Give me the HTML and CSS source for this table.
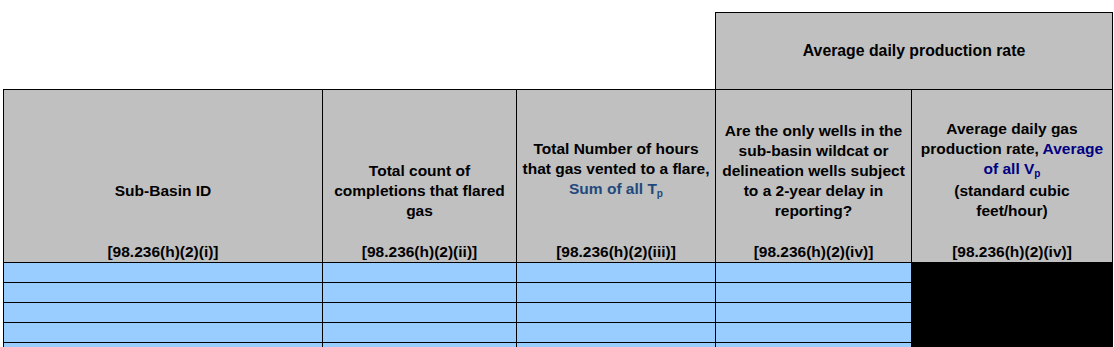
FILE: index.html
```html
<!DOCTYPE html>
<html lang="en">
<head>
<meta charset="utf-8">
<title>Flared gas by sub-basin</title>
<link rel="stylesheet" href="styles.css">
</head>
<body>
<div class="sheet">
  <div class="spacer"></div>
  <div class="cell group">Average daily production rate</div>

  <div class="cell head">
    <div class="label gap-lg">Sub-Basin ID</div>
    <div class="code">[98.236(h)(2)(i)]</div>
  </div>
  <div class="cell head">
    <div class="label">Total count of<br>completions that flared<br>gas</div>
    <div class="code">[98.236(h)(2)(ii)]</div>
  </div>
  <div class="cell head">
    <div class="label gap-lg">Total Number of hours<br>that gas vented to a flare,<br><span class="ref-a">Sum of all T<sub>p</sub></span></div>
    <div class="code">[98.236(h)(2)(iii)]</div>
  </div>
  <div class="cell head">
    <div class="label">Are the only wells in the<br>sub-basin wildcat or<br>delineation wells subject<br>to a 2-year delay in<br>reporting?</div>
    <div class="code">[98.236(h)(2)(iv)]</div>
  </div>
  <div class="cell head last">
    <div class="label">Average daily gas<br>production rate, <span class="ref-b">Average<br>of all V<sub>p</sub></span><br>(standard cubic<br>feet/hour)</div>
    <div class="code">[98.236(h)(2)(iv)]</div>
  </div>

  <div class="cell input"></div><div class="cell input"></div><div class="cell input"></div><div class="cell input"></div><div class="cell blocked last"></div>
  <div class="cell input"></div><div class="cell input"></div><div class="cell input"></div><div class="cell input"></div><div class="cell blocked last"></div>
  <div class="cell input"></div><div class="cell input"></div><div class="cell input"></div><div class="cell input"></div><div class="cell blocked last"></div>
  <div class="cell input"></div><div class="cell input"></div><div class="cell input"></div><div class="cell input"></div><div class="cell blocked last"></div>
  <div class="cell input"></div><div class="cell input"></div><div class="cell input"></div><div class="cell input"></div><div class="cell blocked last"></div>
</div>
</body>
</html>
```

FILE: styles.css
```css
* {
  box-sizing: border-box;
}

html, body {
  margin: 0;
  padding: 0;
  background: #ffffff;
  overflow: hidden;
}

body {
  font-family: "Liberation Sans", Arial, sans-serif;
  font-weight: bold;
  font-size: 15.5px;
  line-height: 20px;
  color: #000000;
}

.sheet {
  display: grid;
  grid-template-columns: 319px 194px 199px 196px 202px;
  grid-template-rows: 77px 173px repeat(5, 20px);
  margin: 12px 0 0 3px;
  width: 1110px;
}

.spacer {
  grid-column: span 3;
}

.cell {
  border-left: 1px solid #000000;
  border-top: 1px solid #000000;
}

.cell.last {
  border-right: 1px solid #000000;
}

.group {
  grid-column: span 2;
  border-right: 1px solid #000000;
  background: #c0c0c0;
  display: flex;
  align-items: center;
  justify-content: center;
  padding-bottom: 1px;
  font-size: 15.8px;
}

.head {
  background: #c0c0c0;
  display: flex;
  flex-direction: column;
  justify-content: flex-end;
  align-items: center;
  text-align: center;
  padding: 0 2px;
}

.label {
  margin-bottom: 21px;
}

.label.gap-lg {
  margin-bottom: 41px;
}

.code {
  height: 20px;
}

.ref-a {
  color: #1f497d;
}

.ref-b {
  color: #000080;
}

sub {
  font-size: 10px;
  line-height: 14px;
  vertical-align: -3px;
}

.input {
  background: #99ccff;
}

.blocked {
  background: #000000;
}
```
